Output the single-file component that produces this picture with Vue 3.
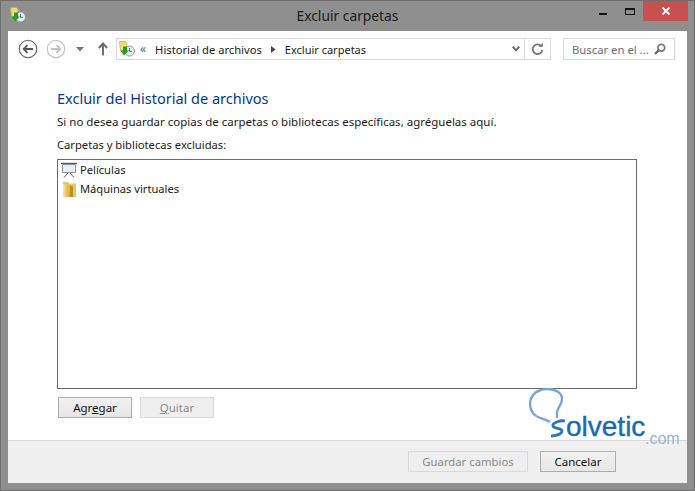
<script setup>
const items = [
  { name: 'Películas', icon: 'movie' },
  { name: 'Máquinas virtuales', icon: 'folder' },
]
</script>

<template>
  <div class="window">
    <header class="titlebar">
      <svg class="app-icon" width="16" height="16" viewBox="0 0 16 16">
        <path d="M.5.500h6l1.500 2v7H1.500z" fill="#f0dc78" stroke="#bfa94e" stroke-width=".7"/>
        <circle cx="10.500" cy="10" r="5" fill="#e4ebea" stroke="#8aa0a0"/>
        <path d="M10.500 7v3.300h2.500" fill="none" stroke="#55706f"/>
        <path d="M8 5.500v4h2L5 14.500 1.500 9.500h2.500v-4z" fill="#2f9a2a"/>
      </svg>
      <span class="title">Excluir carpetas</span>
      <div class="controls">
        <span class="min"></span>
        <span class="max"></span>
        <span class="close">
          <svg width="10" height="10" viewBox="0 0 10 10"><path d="M1.500 1.500l7 7M8.500 1.500l-7 7" stroke="#fff" stroke-width="1.800"/></svg>
        </span>
      </div>
    </header>

    <main class="client">
      <nav class="toolbar">
        <svg class="nav-btn" width="20" height="20" viewBox="0 0 20 20">
          <circle cx="10" cy="10" r="8.700" fill="#fff" stroke="#6f6f6f" stroke-width="1.200"/>
          <path d="M15 10H6M9.500 6.200L5.700 10l3.800 3.800" fill="none" stroke="#555" stroke-width="1.800"/>
        </svg>
        <svg class="nav-btn fwd" width="20" height="20" viewBox="0 0 20 20">
          <circle cx="10" cy="10" r="8.700" fill="#fff" stroke="#c4c4c4" stroke-width="1.200"/>
          <path d="M5 10h9M10.500 6.200l3.800 3.800-3.800 3.800" fill="none" stroke="#c2c2c2" stroke-width="1.800"/>
        </svg>
        <svg class="drop" width="8" height="5" viewBox="0 0 8 5"><path d="M0 0h8L4 4.500z" fill="#777"/></svg>
        <svg class="up" width="12" height="14" viewBox="0 0 12 14">
          <path d="M6 13.500V2M1.800 6L6 1.500 10.200 6" fill="none" stroke="#6a6a6a" stroke-width="1.900"/>
        </svg>

        <div class="address">
          <svg class="addr-icon" width="16" height="16" viewBox="0 0 16 16">
            <path d="M.5.500h6l1.500 2v7H1.500z" fill="#f0dc78" stroke="#bfa94e" stroke-width=".7"/>
            <circle cx="10.500" cy="10" r="5" fill="#e4ebea" stroke="#8aa0a0"/>
            <path d="M10.500 7v3.300h2.500" fill="none" stroke="#55706f"/>
            <path d="M8 5.500v4h2L5 14.500 1.500 9.500h2.500v-4z" fill="#2f9a2a"/>
          </svg>
          <span class="crumb-more">«</span>
          <span class="crumb">Historial de archivos</span>
          <svg class="sep" width="5" height="7" viewBox="0 0 5 7"><path d="M0 0l4.500 3.500L0 7z" fill="#444"/></svg>
          <span class="crumb last">Excluir carpetas</span>
          <svg class="chev" width="8" height="6" viewBox="0 0 8 6"><path d="M.7.700L4 4.300 7.300.7" fill="none" stroke="#666" stroke-width="1.800"/></svg>
          <span class="refresh">
            <svg width="13" height="14" viewBox="0 0 13 14">
              <path d="M10.500 4.500A4.800 4.800 0 1 0 11.300 8" fill="none" stroke="#777" stroke-width="1.700"/>
              <path d="M7.500 4.800h4.300V.7z" fill="#777"/>
            </svg>
          </span>
        </div>

        <div class="search">
          <span class="search-text">Buscar en el ...</span>
          <svg width="12" height="12" viewBox="0 0 12 12">
            <circle cx="7.300" cy="4.700" r="3.400" fill="none" stroke="#777" stroke-width="1.700"/>
            <path d="M4.800 7.200L1 11" stroke="#666" stroke-width="2.200"/>
          </svg>
        </div>
      </nav>

      <section class="content">
        <h1>Excluir del Historial de archivos</h1>
        <p class="desc">Si no desea guardar copias de carpetas o bibliotecas específicas, agréguelas aquí.</p>
        <p class="label">Carpetas y bibliotecas excluidas:</p>
        <ul class="list">
          <li v-for="item in items" :key="item.name">
            <svg v-if="item.icon === 'movie'" width="16" height="16" viewBox="0 0 16 16">
              <path d="M0 1.500h16" stroke="#555" stroke-width="1.400"/>
              <path d="M1.500 2.500h13v8h-13z" fill="#e9eef2" stroke="#8d939a"/>
              <path d="M7 11l-4 4.500M9 11l4 4.500" stroke="#555" stroke-width="1"/>
            </svg>
            <svg v-else width="16" height="16" viewBox="0 0 16 16">
              <defs>
                <linearGradient id="fold" x1="0" x2="1" y1="0" y2="0">
                  <stop offset="0" stop-color="#f7e9a8"/>
                  <stop offset=".55" stop-color="#e6c455"/>
                  <stop offset="1" stop-color="#d9ac3e"/>
                </linearGradient>
              </defs>
              <path d="M2 1h5l1 1.500h7V16H2z" fill="#e8c75c"/>
              <path d="M2 3l7 1.500V16H2z" fill="url(#fold)"/>
              <path d="M9 4.500l3 1V16H9z" fill="#b98f2e"/>
            </svg>
            <span>{{ item.name }}</span>
          </li>
        </ul>
        <div class="list-actions">
          <button class="btn"><span>Agr<u>e</u>gar</span></button>
          <button class="btn disabled"><span><u>Q</u>uitar</span></button>
        </div>
      </section>

      <footer class="footer">
        <button class="btn save disabled">Guardar cambios</button>
        <button class="btn cancel">Cancelar</button>
      </footer>

      <div class="logo">
        <svg width="40" height="52" viewBox="0 0 40 52">
          <path d="M21 34C14 30 7 30 4 25 0 20 0 12 4 7 8 2 14 1 19 1c8 0 14 4 14 10 0 6-5 9-5 14v5" fill="none" stroke="#74a5d4" stroke-width="2.300"/>
          <path d="M36 33c-5-1-13 2-12 5 1 3 9 2 9 5s-6 5-11 5" fill="none" stroke="#2a78bb" stroke-width="2.800"/>
        </svg>
        <span class="olvetic">olvetic</span>
        <span class="com">.com</span>
      </div>
    </main>
  </div>
</template>

<style>
html, body { margin: 0; background: #8f8f8f; }
</style>

<style scoped>
.window {
  width: 695px;
  height: 491px;
  box-sizing: border-box;
  background: #8f8f8f;
  border: 1px solid #6e6e6e;
  display: flex;
  flex-direction: column;
  font-family: "Noto Sans", "Open Sans", sans-serif;
  font-size: 11.500px;
  color: #1a1a1a;
  overflow: hidden;
}
.titlebar {
  height: 30px;
  flex: none;
  position: relative;
  display: flex;
  align-items: center;
  justify-content: center;
  padding-bottom: 2px;
  box-sizing: border-box;
}
.app-icon { position: absolute; left: 9px; top: 6px; }
.title { font-size: 13.800px; color: #1c1c1c; }
.controls {
  position: absolute;
  right: 6px;
  top: 0;
  display: flex;
  align-items: flex-start;
}
.min { width: 8px; height: 2px; background: #111; margin: 12px 18px 0 0; }
.max {
  width: 10px;
  height: 7px;
  box-sizing: border-box;
  border: 1px solid #111;
  border-top-width: 2px;
  margin: 7px 8px 0 0;
}
.close {
  width: 45px;
  height: 20px;
  background: #c75050;
  display: flex;
  align-items: center;
  justify-content: center;
}
.client {
  position: relative;
  flex: 1;
  margin: 0 7px 7px;
  background: #fff;
  display: flex;
  flex-direction: column;
  min-height: 0;
}
.toolbar {
  height: 36px;
  flex: none;
  display: flex;
  align-items: center;
  padding-left: 10px;
  box-sizing: border-box;
}
.nav-btn { flex: none; }
.fwd { margin-left: 8px; }
.drop { margin-left: 10px; }
.up { margin-left: 13px; margin-right: 7px; }
.address {
  width: 435px;
  height: 22px;
  box-sizing: border-box;
  border: 1px solid #d9d9d9;
  display: flex;
  align-items: center;
  padding-left: 2px;
}
.addr-icon { margin-bottom: 1px; }
.crumb-more { margin: 0 8px 1px 5px; color: #666; font-size: 12px; }
.crumb { font-size: 11.200px; margin-left: 1px; }
.crumb.last { font-size: 11px; margin-left: 0; }
.sep { margin: 0 9px; }
.chev { margin-left: auto; margin-right: 4px; }
.refresh {
  width: 25px;
  height: 20px;
  border-left: 1px solid #d9d9d9;
  display: flex;
  align-items: center;
  justify-content: center;
}
.search {
  width: 112px;
  height: 22px;
  box-sizing: border-box;
  margin-left: 12px;
  border: 1px solid #d9d9d9;
  display: flex;
  align-items: center;
  justify-content: space-between;
  padding: 0 8px;
  color: #6d6d6d;
  font-size: 11.300px;
}
.content {
  flex: 1;
  padding: 21px 49px 0;
  display: flex;
  flex-direction: column;
  min-height: 0;
}
h1 {
  margin: 0;
  font-size: 14.500px;
  font-weight: 400;
  line-height: 20px;
  color: #003a8c;
}
.desc { margin: 6px 0 0; line-height: 16px; }
.label { margin: 7px 0 0; line-height: 16px; font-size: 11.200px; }
.list {
  list-style: none;
  margin: 6px 0 0;
  padding: 0 0 0 3px;
  width: 580px;
  height: 230px;
  box-sizing: border-box;
  border: 1px solid #6a6a6a;
  font-size: 11.150px;
}
.list li {
  height: 19px;
  display: flex;
  align-items: center;
  gap: 3px;
}
.list-actions {
  display: flex;
  gap: 8px;
  margin: 8px 0 0 1px;
}
.btn {
  width: 74px;
  height: 21px;
  padding: 0;
  box-sizing: border-box;
  border: 1px solid #adadad;
  background: linear-gradient(#f2f2f2, #e6e6e6);
  font: inherit;
  color: #111;
  display: flex;
  align-items: center;
  justify-content: center;
}
.btn.disabled {
  background: #efefef;
  border-color: #d9d9d9;
  color: #8a8a8a;
}
.footer {
  height: 43px;
  flex: none;
  box-sizing: border-box;
  border-top: 1px solid #d8d8d8;
  background: #f0f0f0;
  display: flex;
  align-items: center;
  justify-content: flex-end;
  gap: 12px;
  padding: 0 71px 2px 0;
}
.save { width: 120px; font-size: 11.300px; }
.cancel { width: 76px; }
.logo {
  position: absolute;
  left: 521px;
  top: 357px;
  width: 155px;
  height: 60px;
}
.logo svg { position: absolute; left: 0; top: 0; }
.olvetic {
  position: absolute;
  left: 37px;
  top: 23px;
  font-family: "Liberation Sans", sans-serif;
  font-size: 28px;
  line-height: 32px;
  color: #1a6ab0;
  -webkit-text-stroke: .4px #1a6ab0;
}
.com {
  position: absolute;
  left: 116px;
  top: 42px;
  font-family: "Liberation Sans", sans-serif;
  font-size: 16px;
  line-height: 18px;
  color: #8fb6da;
}
</style>
